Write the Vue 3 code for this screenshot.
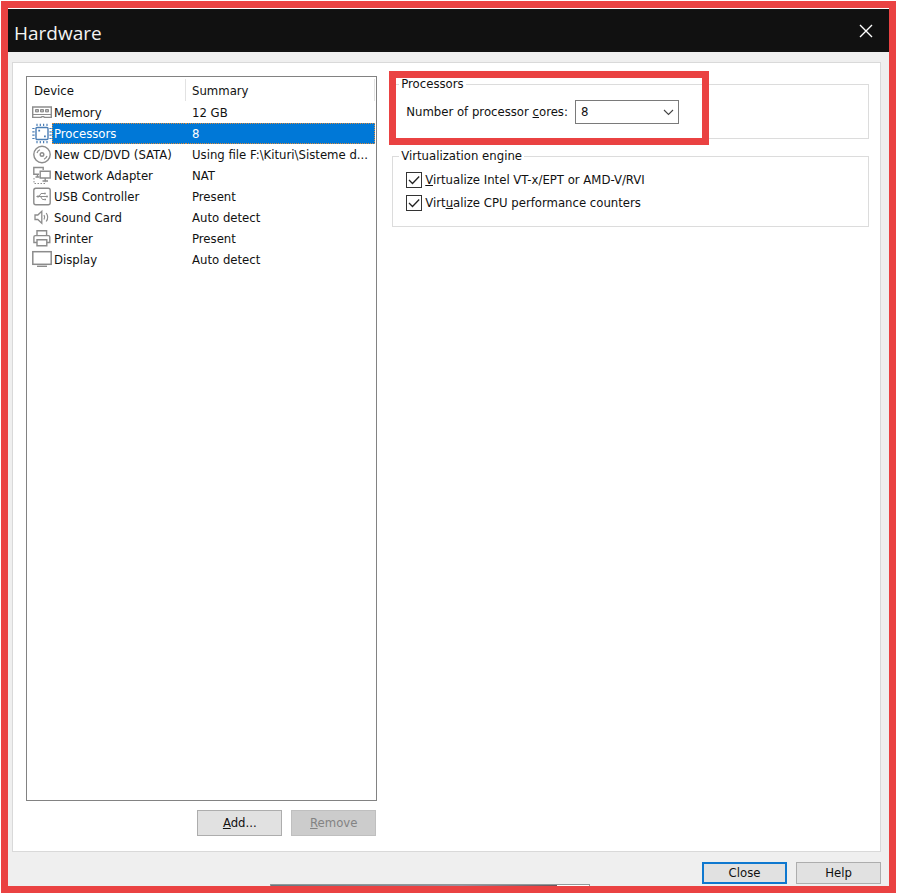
<script setup>
import { ref } from 'vue'

const devices = [
  { name: 'Memory', summary: '12 GB', icon: 'memory' },
  { name: 'Processors', summary: '8', icon: 'cpu' },
  { name: 'New CD/DVD (SATA)', summary: 'Using file F:\\Kituri\\Sisteme d...', icon: 'disc' },
  { name: 'Network Adapter', summary: 'NAT', icon: 'network' },
  { name: 'USB Controller', summary: 'Present', icon: 'usb' },
  { name: 'Sound Card', summary: 'Auto detect', icon: 'sound' },
  { name: 'Printer', summary: 'Present', icon: 'printer' },
  { name: 'Display', summary: 'Auto detect', icon: 'display' },
]

const selected = ref('Processors')
const cores = ref('8')
const virtualizeIntel = ref(true)
const virtualizeCounters = ref(true)
</script>

<template>
  <div class="page">
    <div class="window">
      <header class="titlebar">
        <h1>Hardware</h1>
        <button class="close" type="button" aria-label="Close window">
          <svg width="14" height="14" viewBox="0 0 14 14"><path d="M1 1L13 13M13 1L1 13" stroke="#fff" stroke-width="1.4" fill="none" /></svg>
        </button>
      </header>

      <main class="panel">
        <section class="left">
          <div class="list">
            <table>
              <colgroup><col class="c-icon" /><col class="c-name" /><col /></colgroup>
              <thead>
                <tr><th colspan="2">Device</th><th>Summary</th></tr>
              </thead>
              <tbody>
                <tr v-for="d in devices" :key="d.name" :class="{ selected: d.name === selected }" @click="selected = d.name">
                  <td class="icon">
                    <svg width="20" height="21" viewBox="0 0 20 21" fill="none" stroke="#8c8c8c">
                      <g v-if="d.icon === 'memory'">
                        <path d="M.7 5H19.3V15.4H12.5L11.5 14.6H10L9 15.4H.7Z" stroke-width="1.4" />
                        <path d="M1 12.5H19" />
                        <path d="M3.5 7.5h3v2.4h-3zM8.5 7.5h3v2.4h-3zM13.5 7.5h3v2.4h-3z" fill="#b5b5b5" />
                      </g>
                      <g v-else-if="d.icon === 'cpu'" stroke="#4a7db5">
                        <rect x="4" y="4.5" width="12" height="12" rx="1" stroke-width="1.4" />
                        <path d="M5 .8V3M8.3 .8V3M11.6 .8V3M15 .8V3M5 18v2.2M8.3 18v2.2M11.6 18v2.2M15 18v2.2M.3 5.5H2.6M.3 8.8H2.6M.3 12.1H2.6M.3 15.5H2.6M17.4 5.5h2.3M17.4 8.8h2.3M17.4 12.1h2.3M17.4 15.5h2.3" stroke-width="1.2" />
                        <path d="M6.3 7.7h1.8M12 13.4h1.8" stroke-width="1.8" />
                      </g>
                      <g v-else-if="d.icon === 'disc'">
                        <circle cx="10" cy="10.5" r="8.2" stroke-width="1.4" />
                        <circle cx="10" cy="10.5" r="1.8" stroke-width="1.4" />
                        <path d="M5 9Q5.8 6.6 8 5.8M15 12Q14.2 14.4 12 15.2" stroke-width="1.2" />
                      </g>
                      <g v-else-if="d.icon === 'network'">
                        <path d="M7 9.2H1.8V2.5H11.2V5M3.5 12h4M5.5 9.5V12" stroke-width="1.4" />
                        <path d="M8.2 6.2H18.2V13H8.2ZM13.2 13V15.5M10.5 16H16" stroke-width="1.4" />
                        <path d="M2 13V18.5H13.2V16.5" stroke-dasharray="1.5 1.5" />
                      </g>
                      <g v-else-if="d.icon === 'usb'">
                        <rect x="1.8" y="2.3" width="16.4" height="16.4" rx="2" stroke-width="1.4" />
                        <path d="M5 10.5H15M7 10.5L9 7.5H12M8.5 10.5L10.5 13.5H12.5" />
                        <path d="M4 10.5L6.5 9V12ZM12 6.7h1.8v1.6H12zM12.3 12.7H14v1.6h-1.7z" fill="#8c8c8c" stroke="none" />
                        <circle cx="15" cy="10.5" r="1" fill="#8c8c8c" stroke="none" />
                      </g>
                      <g v-else-if="d.icon === 'sound'">
                        <path d="M3 8H5.8L9.8 4.2V16.2L5.8 12.5H3Z" stroke-width="1.3" />
                        <path d="M12 8Q13.4 10.2 12 12.5M14.2 6Q17.2 10.2 14.2 14.5" stroke-width="1.2" />
                      </g>
                      <g v-else-if="d.icon === 'printer'">
                        <path d="M5 7.5V2.7H14.6V7.5" stroke-width="1.4" />
                        <path d="M5 14.5H1.9V9Q1.9 7.6 3.3 7.6H16.4Q17.8 7.6 17.8 9V14.5H14.8" stroke-width="1.4" />
                        <path d="M5 11.8H14.8V17.8H5Z" stroke-width="1.4" />
                      </g>
                      <g v-else>
                        <rect x=".8" y="2.7" width="18.4" height="12.6" stroke-width="1.5" />
                        <path d="M5 17.3H15" stroke-width="1.4" />
                      </g>
                    </svg>
                  </td>
                  <td class="name">{{ d.name }}</td>
                  <td class="summary">{{ d.summary }}</td>
                </tr>
              </tbody>
            </table>
          </div>
          <div class="actions">
            <button class="btn" type="button"><u>A</u>dd...</button>
            <button class="btn" type="button" disabled><u>R</u>emove</button>
          </div>
        </section>

        <section class="right">
          <fieldset class="group processors">
            <legend>Processors</legend>
            <div class="field">
              <label for="cores">Number of processor <u>c</u>ores:</label>
              <span class="combo">
                <select id="cores" v-model="cores">
                  <option>1</option>
                  <option>2</option>
                  <option>4</option>
                  <option>8</option>
                </select>
                <svg width="11" height="7" viewBox="0 0 11 7"><path d="M1 1L5.5 5.5L10 1" fill="none" stroke="#444" stroke-width="1.1" /></svg>
              </span>
            </div>
            <span class="highlight"></span>
          </fieldset>

          <fieldset class="group engine">
            <legend>Virtualization engine</legend>
            <label class="check">
              <input v-model="virtualizeIntel" type="checkbox" />
              <svg class="tick" width="16" height="16" viewBox="0 0 16 16"><path d="M3 8L6.5 11.5L13.2 4.5" /></svg>
              <span><u>V</u>irtualize Intel VT-x/EPT or AMD-V/RVI</span>
            </label>
            <label class="check">
              <input v-model="virtualizeCounters" type="checkbox" />
              <svg class="tick" width="16" height="16" viewBox="0 0 16 16"><path d="M3 8L6.5 11.5L13.2 4.5" /></svg>
              <span>Virt<u>u</u>alize CPU performance counters</span>
            </label>
          </fieldset>
        </section>
      </main>

      <footer class="footer">
        <button class="btn default" type="button">Close</button>
        <button class="btn" type="button">Help</button>
      </footer>
      <span class="behind"></span>
    </div>
  </div>
</template>

<style>
body {
  background: #fff;
}
</style>

<style scoped>
* {
  box-sizing: border-box;
}
.page {
  min-height: 100vh;
  display: flex;
  padding: 1px 1px 0;
  font: 13px/16px "DejaVu Sans Condensed", "Noto Sans", sans-serif;
  color: #111;
}
.window {
  position: relative;
  flex: 1;
  min-width: 0;
  display: flex;
  flex-direction: column;
  border: 7px solid #ea4242;
  background: #efefef;
}
.titlebar {
  display: flex;
  align-items: center;
  justify-content: space-between;
  height: 44px;
  padding: 1px 16px 0 6px;
  border-top: 1px solid #fff;
  background: #111;
}
h1 {
  margin: 0;
  padding-top: 3px;
  font: 19px/28px "Open Sans", sans-serif;
  color: #f4f4f4;
}
.close {
  display: flex;
  padding: 0;
  border: 0;
  background: none;
}
.panel {
  flex: 1;
  display: grid;
  grid-template-columns: 14fr 19fr;
  gap: 15px;
  margin: 10px 8px 10px 4px;
  padding: 13px 11px 15px 13px;
  border: 1px solid #d9d9d9;
  background: #fff;
}
.left {
  min-width: 0;
  display: flex;
  flex-direction: column;
}
.list {
  flex: 1;
  padding-right: 1px;
  border: 1px solid #828282;
}
table {
  width: 100%;
  table-layout: fixed;
  border-collapse: separate;
  border-spacing: 0;
}
.c-icon {
  width: 25px;
}
.c-name {
  width: 134px;
}
th {
  height: 25px;
  padding: 2px 0 0 7px;
  font-weight: 400;
  text-align: left;
  background: linear-gradient(#e2e2e2, #e2e2e2) right 2px / 1px 22px no-repeat;
}
th + th {
  padding-left: 6px;
}
td {
  height: 21px;
  padding: 0;
  white-space: nowrap;
  overflow: hidden;
  text-overflow: ellipsis;
}
.icon {
  padding-left: 5px;
}
.icon svg {
  display: block;
}
.name {
  padding-left: 2px;
}
.summary {
  padding-left: 6px;
}
.selected .name,
.selected .summary {
  color: #fff;
  background: #0078d7;
  border: 0 dotted #d98a3c;
  border-width: 1px 0;
}
.selected .name {
  border-left-width: 1px;
  padding-left: 1px;
}
.selected .summary {
  border-right-width: 1px;
}
.actions {
  display: flex;
  justify-content: flex-end;
  gap: 9px;
  padding: 9px 1px 0 0;
}
.btn {
  width: 85px;
  height: 26px;
  padding: 0;
  border: 1px solid #adadad;
  background: #e1e1e1;
  font: inherit;
  color: #111;
}
.btn:disabled {
  border-color: #bfbfbf;
  background: #ccc;
  color: #838383;
}
.right {
  min-width: 0;
  display: flex;
  flex-direction: column;
  gap: 9px;
}
.group {
  position: relative;
  min-width: 0;
  margin: 0;
  padding: 8px 13px;
  border: 1px solid #dcdcdc;
}
legend {
  margin-left: -7px;
  padding: 0 2px;
}
.processors {
  height: 63px;
}
.field {
  display: flex;
  align-items: center;
  gap: 7px;
}
.combo {
  display: grid;
  align-items: center;
  width: 104px;
}
.combo > * {
  grid-area: 1 / 1;
}
.combo svg {
  justify-self: end;
  margin-right: 5px;
  pointer-events: none;
}
select {
  width: 100%;
  height: 24px;
  padding: 0 5px;
  border: 1px solid #7a7a7a;
  border-radius: 0;
  background: #fff;
  appearance: none;
  font: inherit;
  color: #111;
}
.highlight {
  position: absolute;
  top: -21px;
  left: -4px;
  width: 320px;
  height: 74px;
  border: 7px solid #ea4242;
  pointer-events: none;
}
.engine {
  height: 79px;
}
.check {
  display: grid;
  grid-template-columns: 16px auto;
  column-gap: 3px;
  align-items: center;
  justify-content: start;
  height: 16px;
}
.check + .check {
  margin-top: 7px;
}
.check input {
  grid-area: 1 / 1;
  width: 16px;
  height: 16px;
  margin: 0;
  border: 1px solid #333;
  background: #fff;
  appearance: none;
}
.tick {
  grid-area: 1 / 1;
  fill: none;
  stroke: #222;
  stroke-width: 1.3;
  visibility: hidden;
  pointer-events: none;
}
input:checked + .tick {
  visibility: visible;
}
.footer {
  display: flex;
  justify-content: flex-end;
  gap: 9px;
  padding: 0 8px 2px 0;
}
.footer .btn {
  height: 22px;
}
.footer .default {
  border: 2px solid #0f78cf;
}
.behind {
  position: absolute;
  left: 262px;
  bottom: 0;
  width: 320px;
  height: 2px;
  border: 1px solid #909999;
  border-bottom: 0;
  background: linear-gradient(90deg, #647880, #9a90a0 60%, #6b555c 90%, #fff 90%);
}
</style>
